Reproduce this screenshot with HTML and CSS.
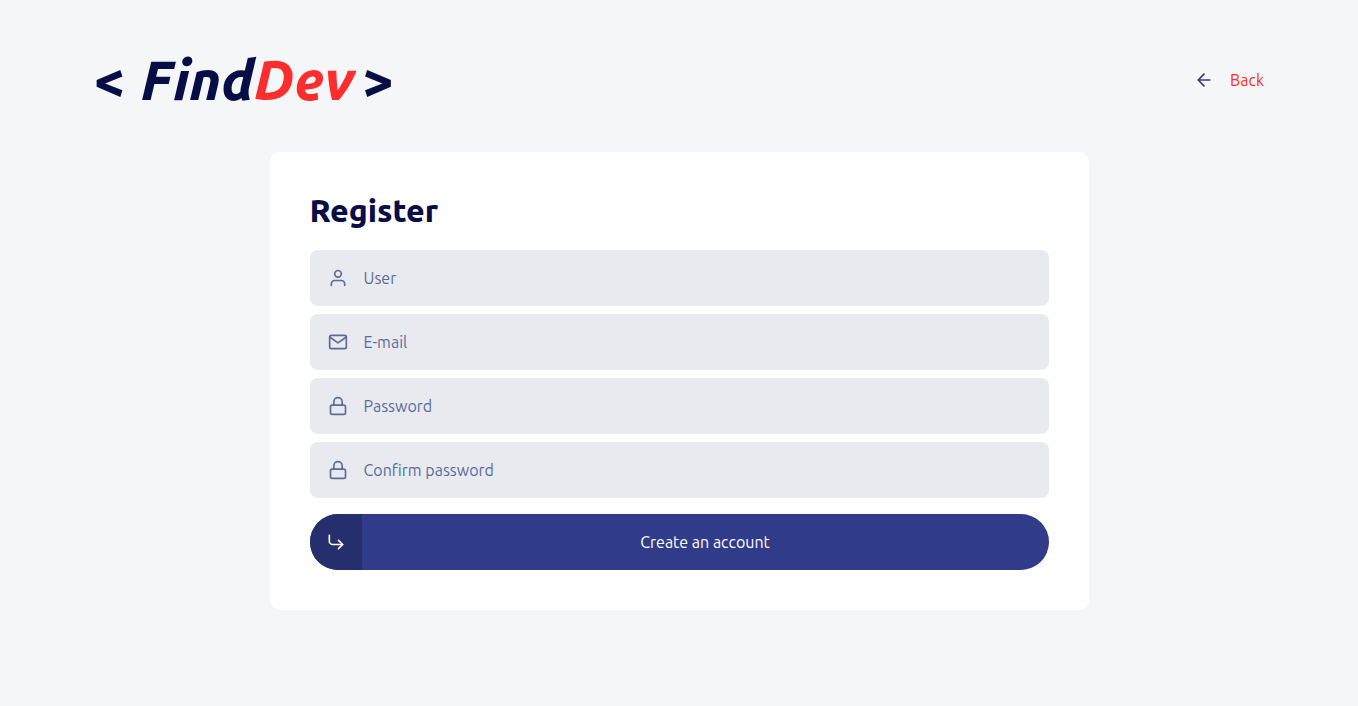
FILE: index.html
```html
<!DOCTYPE html>
<html lang="en">
<head>
<meta charset="utf-8">
<meta name="viewport" content="width=device-width, initial-scale=1">
<title>FindDev - Register</title>
<link rel="stylesheet" href="styles.css">
</head>
<body>
<div class="container">
  <header class="header">
    <a class="logo" href="#"><span>&lt;</span><span class="name">Find<span class="accent">Dev</span></span><span>&gt;</span></a>
    <a class="back" href="#">
      <svg class="icon icon-back" viewBox="0 0 24 24" aria-hidden="true"><path d="M19 12H5M12 19l-7-7 7-7"/></svg>
      Back
    </a>
  </header>
  <main class="card">
    <h1 class="title">Register</h1>
    <form class="form">
      <div class="field">
        <svg class="icon" viewBox="0 0 24 24" aria-hidden="true"><path d="M20 21v-2a4 4 0 0 0-4-4H8a4 4 0 0 0-4 4v2"/><circle cx="12" cy="7" r="4"/></svg>
        <input class="input" type="text" placeholder="User" aria-label="User">
      </div>
      <div class="field">
        <svg class="icon" viewBox="0 0 24 24" aria-hidden="true"><path d="M4 4h16a2 2 0 0 1 2 2v12a2 2 0 0 1-2 2H4a2 2 0 0 1-2-2V6a2 2 0 0 1 2-2z"/><path d="M22 6l-10 7L2 6"/></svg>
        <input class="input" type="email" placeholder="E-mail" aria-label="E-mail">
      </div>
      <div class="field">
        <svg class="icon" viewBox="0 0 24 24" aria-hidden="true"><rect x="3" y="11" width="18" height="11" rx="2"/><path d="M7 11V7a5 5 0 0 1 10 0v4"/></svg>
        <input class="input" type="password" placeholder="Password" aria-label="Password">
      </div>
      <div class="field">
        <svg class="icon" viewBox="0 0 24 24" aria-hidden="true"><rect x="3" y="11" width="18" height="11" rx="2"/><path d="M7 11V7a5 5 0 0 1 10 0v4"/></svg>
        <input class="input" type="password" placeholder="Confirm password" aria-label="Confirm password">
      </div>
      <button class="submit" type="submit">
        <span class="submit-icon"><svg class="icon" viewBox="0 0 24 24" aria-hidden="true"><path d="M15 10l5 5-5 5"/><path d="M4 4v7a4 4 0 0 0 4 4h12"/></svg></span>
        <span class="submit-label">Create an account</span>
      </button>
    </form>
  </main>
</div>
</body>
</html>
```
FILE: styles.css
```css
* {
  box-sizing: border-box;
  margin: 0;
  padding: 0;
}

body {
  background: #f4f6f8;
  color: #070d45;
  font: 16px/24px Ubuntu, "Noto Sans", sans-serif;
}

.container {
  width: 100%;
  max-width: 1170px;
  margin: 0 auto;
}

.header {
  display: flex;
  align-items: center;
  justify-content: space-between;
  padding: 40px 0 32px;
}

.logo {
  display: flex;
  align-items: baseline;
  gap: 8px;
  color: #070d45;
  font-size: 55px;
  font-weight: 800;
  line-height: 80px;
  text-decoration: none;
}

.name {
  padding-left: 8px;
  font-style: italic;
}

.accent {
  color: #ff2e2e;
}

.back {
  display: flex;
  align-items: center;
  gap: 16px;
  color: #ff2e2e;
  text-decoration: none;
}

.icon {
  flex: none;
  width: 20px;
  height: 20px;
  fill: none;
  stroke: currentColor;
  stroke-width: 2;
  stroke-linecap: round;
  stroke-linejoin: round;
}

.icon-back {
  color: #303c8a;
}

.card {
  width: 70%;
  margin: 0 auto;
  padding: 40px;
  border-radius: 10px;
  background: #fff;
}

.title {
  margin-bottom: 22px;
  font-size: 32px;
  font-weight: 800;
  line-height: 36px;
}

.form {
  display: flex;
  flex-direction: column;
  gap: 8px;
}

.field {
  display: flex;
  align-items: center;
  gap: 16px;
  height: 56px;
  padding: 0 18px;
  border-radius: 8px;
  background: #e9eaef;
  color: #5c6a9c;
}

.input {
  flex: 1;
  min-width: 0;
  height: 100%;
  border: 0;
  outline: 0;
  background: transparent;
  color: #070d45;
  font: inherit;
}

.input::placeholder {
  color: #5c6a9c;
  opacity: 1;
}

.submit {
  display: flex;
  height: 56px;
  margin-top: 8px;
  overflow: hidden;
  border: 0;
  border-radius: 28px;
  background: #303c8a;
  color: #fff;
  font: inherit;
  cursor: pointer;
}

.submit-icon {
  display: flex;
  align-items: center;
  justify-content: center;
  width: 52px;
  height: 100%;
  background: #262f6e;
}

.submit-label {
  flex: 1;
  align-self: center;
}
```
